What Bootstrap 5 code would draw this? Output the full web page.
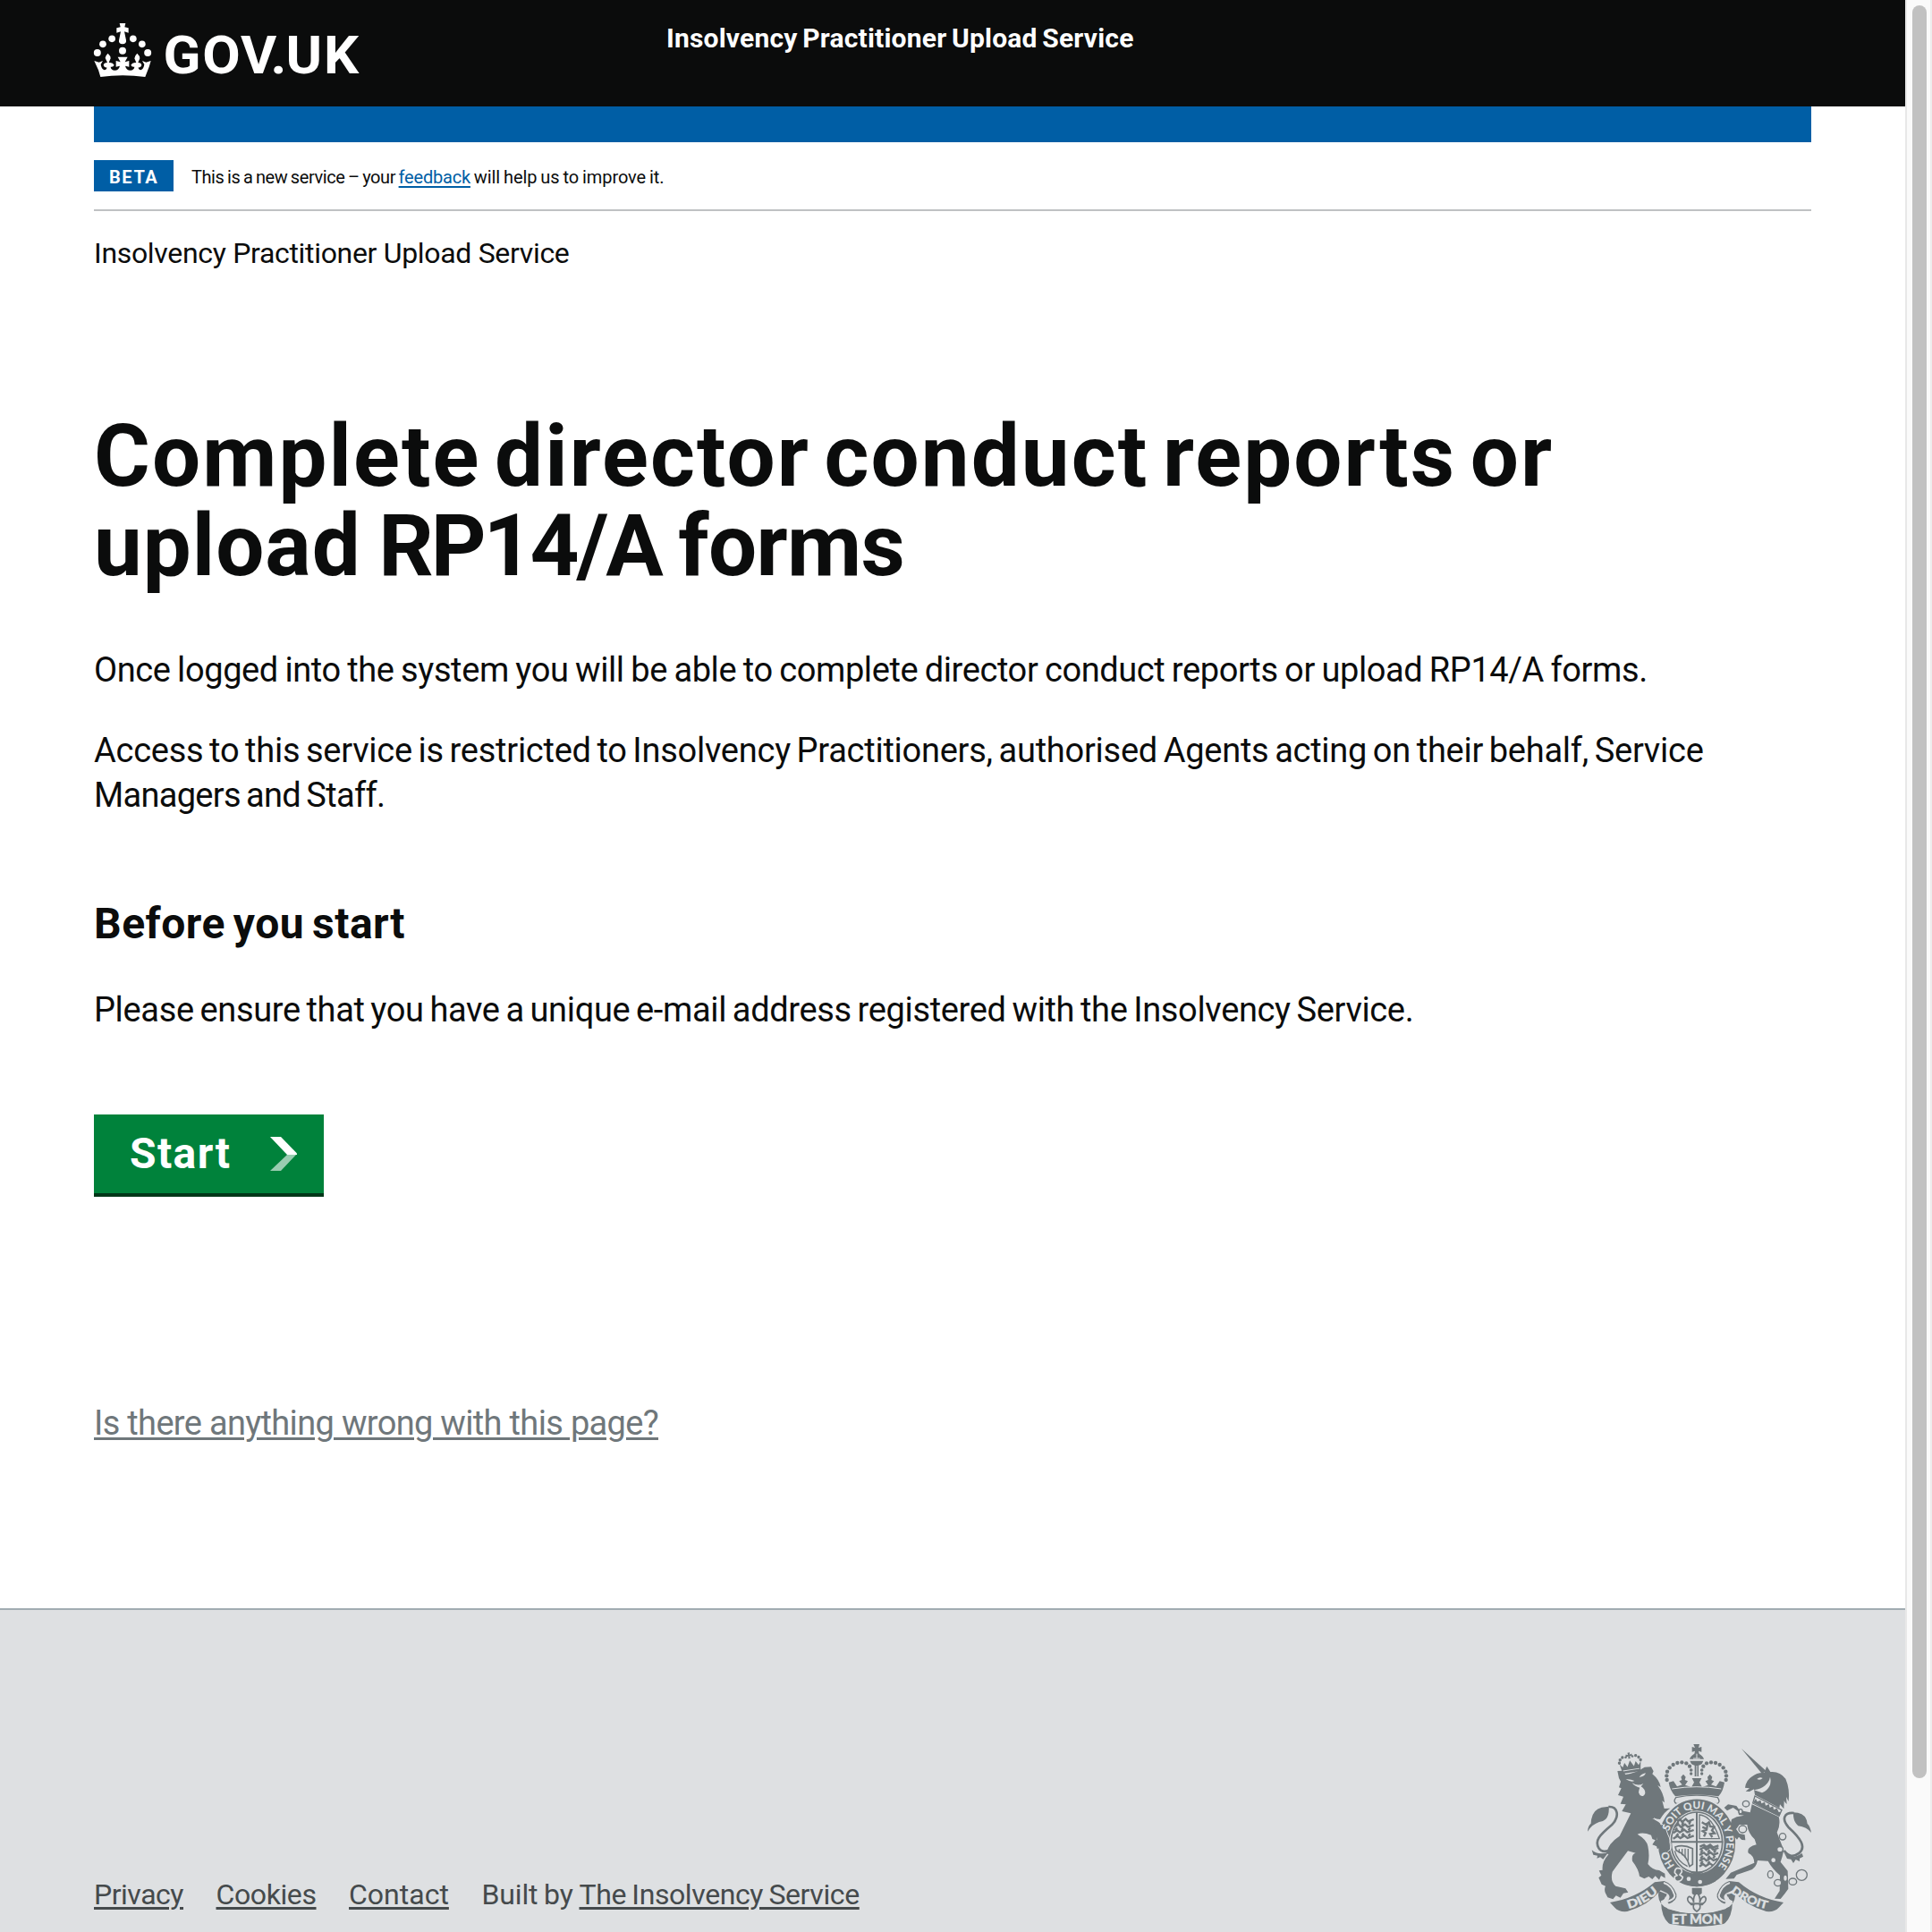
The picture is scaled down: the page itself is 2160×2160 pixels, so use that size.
<!DOCTYPE html>
<html lang="en">
<head>
<meta charset="utf-8">
<meta name="viewport" content="width=device-width, initial-scale=1">
<title>Insolvency Practitioner Upload Service</title>
<link href="https://cdn.jsdelivr.net/npm/bootstrap@5.3.0/dist/css/bootstrap.min.css" rel="stylesheet">
<style>
html,body{height:100%;overflow:hidden}
body{font-family:Roboto,"Liberation Sans",sans-serif;color:#0b0c0c;background:#fff;font-size:38px;line-height:50px}
a{text-decoration-thickness:3px;text-underline-offset:3px}
.shell{height:2160px}
.page-col{min-width:0;overflow:hidden}
.wrap{padding-left:105px;padding-right:105px}
.top-bar{background:#0b0c0c;height:119px;color:#fff}
.logo-box{width:640px;padding-top:25px}
.logo-box svg{overflow:visible}
.service-name{font-size:30px;line-height:40px;font-weight:700;padding-top:23px;letter-spacing:.2px;word-spacing:-2px}
.blue-bar{height:40px;background:#005ea5}
.phase{margin-top:20px;height:57px;border-bottom:2px solid #bfc1c3;font-size:20px;line-height:35px}
.phase-tag{background:#005ea5;color:#fff;font-weight:700;width:89px;height:35px;letter-spacing:1.600px;padding:2px 0 0 17px;margin-right:20px}
.phase-msg{padding-top:2px;letter-spacing:-.42px;word-spacing:-1px}
.phase-msg a{color:#005ea5;text-decoration-thickness:2px;letter-spacing:-.2px}
.phase-end{letter-spacing:-.07px}
.crumb{font-size:32px;line-height:40px;margin-top:27px;letter-spacing:-.32px}
.title-xl{font-size:96px;line-height:100px;font-weight:700;margin:157px 0 64px}
.title-xl .ln{display:block;white-space:nowrap}
.t1{letter-spacing:2.1px;word-spacing:-10.500px}
.t2{letter-spacing:1px;word-spacing:-5.500px}
.t2 .code{letter-spacing:-3px}
.t2 .last{letter-spacing:-.6px}
.body-p{margin-bottom:40px}
.p1{letter-spacing:-.4px;word-spacing:-1.500px}
.p2{letter-spacing:-.25px;word-spacing:-2.500px}
.p2 .tail{letter-spacing:-.7px}
.p3{letter-spacing:-.35px;word-spacing:-2.300px;margin-bottom:92px}
.title-m{font-size:48px;line-height:60px;font-weight:700;letter-spacing:.5px;word-spacing:-3.500px;margin:89px 0 41px}
.start-btn{background:#00823b;color:#fff;border:0;border-bottom:4px solid #003618;border-radius:0;height:92px;width:257px;font-size:48px;line-height:88px;font-weight:700;letter-spacing:1.400px;padding:0 30px 0 40px}
.report{color:#6f777b;letter-spacing:-.67px;margin-top:228px;margin-bottom:182px}
.report a{color:inherit}
.foot{background:#dee0e2;border-top:2px solid #a1acb2;color:#454a4c;height:362px;font-size:32px;line-height:40px}
.foot a{color:inherit}
.foot-links{padding-top:298px;gap:36.500px}
.built{letter-spacing:-.1px;word-spacing:-1.200px}
.built a{letter-spacing:-.4px}
.crest{margin-top:150px}
.track{width:30px;background:#fafafa;border-left:2px solid #e8e8e8;border-right:2px solid #ededed;padding:6px 4px 0 6px}
.thumb{height:1982px;border-radius:8px;background:#c1c1c1}
</style>
<script src="https://cdn.jsdelivr.net/npm/bootstrap@5.3.0/dist/js/bootstrap.bundle.min.js"></script>
</head>
<body>
<div class="shell d-flex">
<div class="page-col flex-grow-1 d-flex flex-column">
  <header class="top-bar wrap d-flex flex-shrink-0">
    <div class="logo-box flex-shrink-0">
      <svg class="d-block" width="310" height="62" viewBox="45 75 930 186" fill="#fff">
        <path d="M131 78H151L148 91 161 94V110L147 106 153 135Q155 147 141 148 127 147 129 135L135 106 121 110V94L134 91Z"/>
        <g><circle cx="105.500" cy="130" r="11.500"/><circle cx="176.500" cy="130" r="11.500"/><circle cx="75" cy="148" r="11.500"/><circle cx="206.500" cy="148" r="11.500"/><circle cx="56.500" cy="177" r="12"/><circle cx="225.500" cy="177" r="12"/><circle cx="141" cy="170" r="12"/></g>
        <path d="M46 204L62 209 75 204 68 216Q70 232 80 235 89 234 88 226 80 228 77 219 78 210 90 210L83 194Q84 186 92 179 101 187 101 196L95 210Q108 208 113 218 110 226 101 224 102 235 115 236 128 236 132 221L119 224V204L134 208 125 191H158L149 208 163 204V224L150 221Q154 236 167 236 180 235 181 224 172 226 169 218 174 208 187 210L181 196Q182 186 190 179 199 187 199 196L193 210Q204 210 205 219 202 228 194 226 194 234 202 235 212 232 214 216L207 204 220 209 236 204 230 224 217 258Q141 248 67 258L60 235Z"/>
        <text transform="scale(1.05 1)" x="264 389.500 511.500 607 656 777" y="246" font-family="Roboto,'Liberation Sans',sans-serif" font-weight="700" font-size="176">GOV.UK</text>
      </svg>
    </div>
    <div class="service-name">Insolvency Practitioner Upload Service</div>
  </header>

  <main class="wrap flex-shrink-0">
    <div class="blue-bar"></div>
    <div class="phase d-flex">
      <strong class="phase-tag">BETA</strong>
      <span class="phase-msg">This is a new service – your <a href="#">feedback</a><span class="phase-end"> will help us to improve it.</span></span>
    </div>
    <div class="crumb">Insolvency Practitioner Upload Service</div>
    <h1 class="title-xl"><span class="ln t1">Complete director conduct reports or</span><span class="ln t2">upload <span class="code">RP14/A</span> <span class="last">forms</span></span></h1>
    <p class="body-p p1">Once logged into the system you will be able to complete director conduct reports or upload RP14/A forms.</p>
    <p class="body-p p2">Access to this service is restricted to Insolvency Practitioners, authorised Agents acting on their behalf, Service<br><span class="tail">Managers and Staff.</span></p>
    <h2 class="title-m">Before you start</h2>
    <p class="body-p p3">Please ensure that you have a unique e-mail address registered with the Insolvency Service.</p>
    <a class="start-btn btn d-flex align-items-center justify-content-between" href="#" role="button">Start
      <svg width="30" height="38" viewBox="0 0 30 38"><path fill="#fff" d="M0 0H12L30 18.500V20H19Z"/><path fill="#99cdb1" d="M19 20H29L12 38H0Z"/></svg>
    </a>
    <div class="report"><a href="#">Is there anything wrong with this page?</a></div>
  </main>

  <footer class="foot wrap flex-shrink-0 d-flex justify-content-between align-items-start">
    <div class="foot-links d-flex">
      <a href="#" style="letter-spacing:-.48px">Privacy</a>
      <a href="#" style="letter-spacing:-.4px">Cookies</a>
      <a href="#">Contact</a>
      <span class="built">Built by <a href="#">The Insolvency Service</a></span>
    </div>
    <svg class="crest flex-shrink-0" width="250" height="210" viewBox="45 60 750 630" fill="#6f777b">
      <defs>
        <path id="ringText" d="M411 505A99 114 0 0 1 411 277A99 114 0 0 1 411 505"/>
        <path id="dieu" d="M182 612Q238 600 290 550"/>
        <path id="droit" d="M524 556Q580 600 650 614"/>
      </defs>

      <!-- lion -->
      <g transform="rotate(-9 188 125)">
        <path d="M184 88h8l-2 7 8-2v9l-8-2 1 8h-7l1-8-8 2v-9l8 2zM152 122l9 12 8-14 8 15 11-20 11 20 8-15 8 14 9-12-6 33H158z"/>
        <circle cx="152" cy="118" r="5"/><circle cx="156" cy="108" r="5"/><circle cx="165" cy="101" r="5"/><circle cx="176" cy="102" r="4"/><circle cx="199" cy="102" r="4"/><circle cx="210" cy="101" r="5"/><circle cx="219" cy="108" r="5"/><circle cx="224" cy="118" r="5"/>
        <path d="M160 146h56" stroke="#dee0e2" stroke-width="3"/>
      </g>
      <path d="M145 150L163 149 172 162Q205 158 236 137L258 136 266 151 262 160Q286 180 290 204L280 198Q301 226 303 256L295 250 302 276 322 275Q302 287 288 312L262 309Q305 330 308 360 325 390 322 412L312 420 305 408 296 418 289 405 280 413 276 402 262 397 272 382 262 378 258 365Q230 354 212 362 243 380 247 402 254 435 247 462 262 482 285 483L304 494 305 509 291 501 285 515 272 502 262 513 250 504 235 511 219 503Q216 479 195 452 191 429 206 425L180 418Q160 445 128 488 120 520 139 536L172 544 181 557 165 560 155 575 140 568 130 580 112 574 104 558Q100 545 105 536L92 530 82 508 91 500 83 484 95 482Q92 455 115 430L108 425Q115 392 152 368 171 330 190 292L160 285 173 262 155 260 165 236 147 231 158 208 150 205 156 185 150 174Z"/>
      <path fill="#dee0e2" d="M173 178q15-2 29 5-10 6-29-5zM218 170q10-12 22-13-6 14-22 13zM194 190q20 12 38 2l-8 10q14 8 14 22-3 10-11 10-9-3-11-12 1-10 4-16-18-4-26-16z"/>
      <path d="M115 270C146 268 154 302 126 331 84 366 68 384 82 408 92 424 111 422 124 410" fill="none" stroke="#6f777b" stroke-width="8"/>
      <path d="M45 353Q46 333 56 326 58 280 92 272L116 269Q119 309 96 318 62 324 45 353ZM59 415Q80 434 115 422L97 446 87 439 76 443 78 434 64 431Z"/>

      <!-- crown above the shield -->
      <path d="M400 60h20l-3 12 10-3v17l-10-3 2 9q14 9 16 18h-48q2-9 16-18l2-9-10 3V69l10 3zM388 116h45l-5 10q-4 4-11 5v37h-13v-37q-7-1-11-5z"/>
      <path d="M399 108h23M411 92v16M411 132v36" stroke="#dee0e2" stroke-width="3"/>
      <g>
        <circle cx="311" cy="180" r="6.500"/><circle cx="310" cy="166" r="6.500"/><circle cx="312" cy="152" r="6.500"/><circle cx="320" cy="139" r="6.500"/><circle cx="332" cy="129" r="6.500"/><circle cx="346" cy="123" r="6.500"/><circle cx="361" cy="121" r="6.500"/><circle cx="376" cy="124" r="6.500"/><circle cx="387" cy="134" r="6.500"/><circle cx="392" cy="147" r="5.500"/><circle cx="392" cy="159" r="5"/>
        <circle cx="509" cy="180" r="6.500"/><circle cx="510" cy="166" r="6.500"/><circle cx="508" cy="152" r="6.500"/><circle cx="500" cy="139" r="6.500"/><circle cx="488" cy="129" r="6.500"/><circle cx="474" cy="123" r="6.500"/><circle cx="459" cy="121" r="6.500"/><circle cx="444" cy="124" r="6.500"/><circle cx="433" cy="134" r="6.500"/><circle cx="428" cy="147" r="5.500"/><circle cx="428" cy="159" r="5"/>
      </g>
      <path d="M317 188L333 184 345 202 362 196 352 184 361 180 358 170 366 161 374 170 371 180 381 184 372 197 393 204 402 188 395 174H427L420 188 429 204 449 197 440 184 449 180 447 170 455 161 463 170 460 180 469 184 459 196 476 202 488 184 504 188Q500 217 484 235 411 224 339 235 320 212 317 188Z"/>
      <path d="M328 210Q411 196 493 210" fill="none" stroke="#dee0e2" stroke-width="3"/>
      <path d="M341 239Q411 224 481 239 493 256 477 260 411 244 344 260 330 254 341 239Z" fill="#dee0e2" stroke="#6f777b" stroke-width="4"/>

      <!-- garter and shield -->
      <ellipse cx="411" cy="391" rx="132" ry="149" stroke="#dee0e2" stroke-width="5"/>
      <ellipse cx="411" cy="389" rx="92" ry="106" fill="#dee0e2"/>
      <ellipse cx="411" cy="389" rx="86" ry="101" fill="none" stroke="#6f777b" stroke-width="5"/>
      <path d="M411 288V492M323 388H499" stroke="#6f777b" stroke-width="6"/>
      <g fill="none" stroke="#6f777b" stroke-width="7">
        <path d="M345 318l10-6 7 9 12-10 8 8 19-7M337 337l12-8 9 9 14-9 9 8 20-6M350 322l-7 10M367 321l-6 11M390 318l-5 11M332 358l14-9 8 7 15-9 10 8 22-7M345 340l-7 10M365 340l-5 10M389 340l-6 9M332 377l14-9 10 7 14-8 10 8 21-8M349 360l-7 9M367 359l-6 9M389 360l-6 9"/>
        <path d="M421 404l14-6 8 7 13-8 10 9 18-6M421 414l14-8 8 8 13-9 10 9 18-6M420 432l15-8 9 8 13-9 10 8 16-6M431 415l-7 10M454 414l-6 10M476 414l-8 10M420 451l15-8 9 8 13-9 10 8 14-6M431 434l-7 10M454 434l-6 10M472 434l-6 9M420 470l12-8 9 7 14-9 10 7M431 452l-7 10M454 453l-6 9"/>
        <path d="M420 377V297Q462 300 487 377Z" stroke-width="4"/>
        <path d="M428 322l14 8 10-8 4 14 13 2-7 11 9 10-15 2 7 11M447 330l-3 17-13 5 10 6-6 12M430 338l12 5"/>
        <path d="M339 405Q365 395 397 410V463L387 470Q378 430 342 416Z" stroke-width="5"/>
        <path d="M352 412v13M362 411v22M372 410v31M382 411v40M337 418Q345 452 380 470" stroke-width="4"/>
      </g>
      <path d="M386 488h50l-25 12z"/>
      <path d="M355 480Q411 520 468 480L474 520Q411 555 350 520Z"/>

      <!-- left forepaw over the garter -->
      <path d="M268 308Q308 330 313 360 328 390 324 412L313 421" fill="none" stroke="#dee0e2" stroke-width="3"/>
      <path d="M264 312Q302 330 307 360 322 390 321 410L313 419 305 407 296 417 289 404 279 412 276 401 265 397 278 380Z"/>

      <!-- unicorn -->
      <path d="M561 75L643 149 630 160Z"/>
      <path d="M573 206Q577 180 596 169 614 154 637 156L646 134 658 153Q690 150 709 176 724 211 719 252L711 237 713 261Q707 257 704 250L703 277 690 262 688 274 606 230 603 211 588 219 575 218 588 208Z"/>
      <path d="M603 214Q650 205 657 170 666 206 630 223Z" fill="#dee0e2"/>
      <path d="M613 177q9-9 19-3-8 8-19 3z" fill="#dee0e2"/>
      <path d="M606 234L696 281 687 300 599 258Z" fill="#dee0e2" stroke="#6f777b" stroke-width="4"/>
      <path d="M600 256l9-13 5 10 11-5 3 11 11-5 3 12 11-5 3 12 11-5 2 12 11-5 6 13 8-1-6 15z"/>
      <path d="M596 262L686 304Q693 330 680 356 695 395 703 415 698 440 692 455L716 485 718 545 706 562 692 579 672 578 689 552 690 500Q664 478 650 452L615 450Q610 478 587 484L545 498 536 511 508 512 525 491Q570 472 604 458 603 433 584 425 577 405 611 397L605 379Q583 358 580 330L554 330 543 345 554 360 572 364 574 382 562 381 552 371 546 380 530 362 522 340 528 312 545 304 570 299 552 297 550 285 533 273 513 283 503 273 516 262 544 267 555 282 590 289Z"/>
      <g fill="#dee0e2" stroke="#6f777b" stroke-width="4">
        <ellipse cx="576" cy="260" rx="11" ry="10"/><ellipse cx="565" cy="345" rx="13" ry="12"/><ellipse cx="558" cy="286" rx="6" ry="8"/><ellipse cx="699" cy="370" rx="11" ry="11"/><ellipse cx="690" cy="413" rx="10" ry="9"/><ellipse cx="668" cy="449" rx="9" ry="9"/><ellipse cx="658" cy="497" rx="9" ry="12"/><ellipse cx="683" cy="525" rx="12" ry="11"/><ellipse cx="708" cy="509" rx="7" ry="11"/><ellipse cx="733" cy="521" rx="13" ry="11"/><circle cx="763" cy="499" r="18"/>
      </g>
      <path d="M737 291C705 288 694 310 718 338 761 377 778 405 755 425 735 440 718 437 704 417" fill="none" stroke="#6f777b" stroke-width="8"/>
      <path d="M795 357Q791 335 782 327 779 290 735 289 733 318 751 334 780 338 795 357ZM704 424Q730 449 764 426L768 437 756 443 756 453 743 447 735 459 727 446 714 444Z"/>

      <!-- garter motto -->
      <g font-family="Lato,Roboto,sans-serif" font-weight="900" fill="#dee0e2" font-size="35">
        <text><textPath href="#ringText" startOffset="85">HO</textPath></text>
        <text><textPath href="#ringText" startOffset="206">SOIT QUI MAL Y PENSE</textPath></text>
      </g>
      <path d="M344 476q18-2 17 12l-7 10 10 8q-4 16-20 14-9-5-7-16l8-4-8-9q0-12 7-15z" stroke="#dee0e2" stroke-width="5"/>
      <circle cx="384" cy="512" r="7" fill="#dee0e2"/><circle cx="422" cy="522" r="7" fill="#dee0e2"/>

      <!-- motto ribbon -->
      <path d="M120 591Q205 578 270 523L302 519Q330 528 343 563 348 584 314 597L303 594Q331 575 312 560L290 550Q250 600 178 621 150 624 136 608Z"/>
      <path d="M702 591Q617 578 552 523L520 519Q492 528 479 563 474 584 508 597L519 594Q491 575 510 560L532 550Q572 600 644 621 672 624 686 608Z"/>
      <path d="M300 525Q327 533 337 567 338 581 308 589M522 525Q495 533 485 567 484 581 514 589" fill="none" stroke="#dee0e2" stroke-width="6"/>
      <path d="M283 552Q277 587 302 605 411 655 520 605 545 587 539 552 531 563 511 563 516 580 531 586 530 640 505 661 411 680 317 661 292 640 291 586 306 580 311 563Z"/>
      <path d="M302 616Q411 640 520 616 519 650 501 663 411 681 321 663 303 650 302 616Z"/>
      <path d="M306 571Q293 599 315 613 411 639 507 613 529 599 516 571 512 592 493 609 411 633 329 609 310 592 306 571Z" fill="#dee0e2"/>
      <path d="M395 542h33v18q-5 7-17 7t-16-7z"/>
      <path d="M411 557q14 16 10 34 4-18 15-20 10 6 3 17l-10 10h-8q6 13-10 23-16-10-10-23h-8l-10-10q-7-11 3-17 11 2 15 20-4-18 10-34z" fill="#dee0e2" stroke="#6f777b" stroke-width="5"/>
      <path d="M390 595h42" stroke="#6f777b" stroke-width="6"/>
      <g font-family="Lato,Roboto,sans-serif" font-weight="900" fill="#dee0e2" stroke="#dee0e2" stroke-width="1">
        <text font-size="40"><textPath href="#dieu" textLength="116" lengthAdjust="spacingAndGlyphs">DIEU</textPath></text>
        <text font-size="38"><textPath href="#droit" textLength="136" lengthAdjust="spacingAndGlyphs">DROIT</textPath></text>
        <text x="326" y="662" font-size="46" textLength="172" lengthAdjust="spacingAndGlyphs">ET MON</text>
      </g>
    </svg>
  </footer>
</div>
<div class="track flex-shrink-0"><div class="thumb"></div></div>
</div>
</body>
</html>
